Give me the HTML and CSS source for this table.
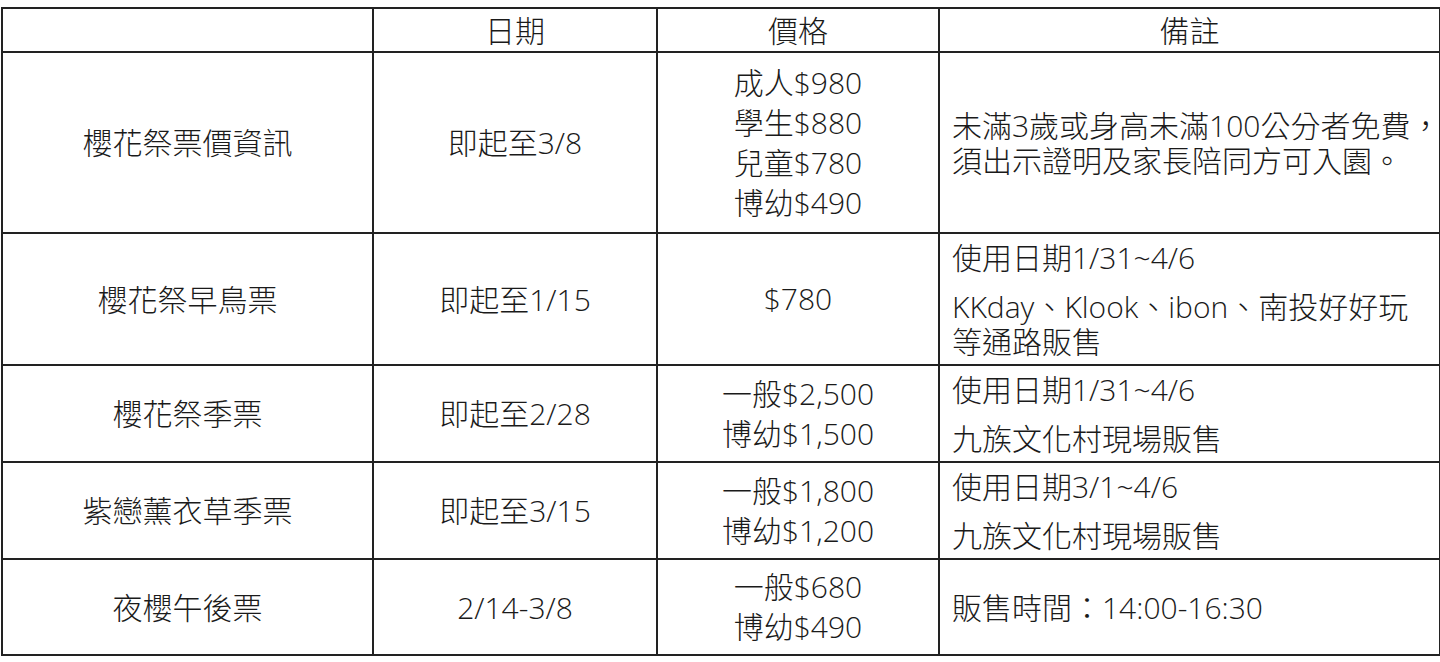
FILE: index.html
```html
<!DOCTYPE html>
<html lang="zh-Hant">
<head>
<meta charset="utf-8">
<title>票價資訊</title>
<link rel="stylesheet" href="styles.css">
</head>
<body>
<table class="tickets">
  <colgroup>
    <col class="c-name">
    <col class="c-date">
    <col class="c-price">
    <col class="c-note">
  </colgroup>
  <thead>
    <tr class="r-head">
      <th></th>
      <th>日期</th>
      <th>價格</th>
      <th>備註</th>
    </tr>
  </thead>
  <tbody>
    <tr class="r1">
      <td>櫻花祭票價資訊</td>
      <td>即起至3/8</td>
      <td class="price">成人$980<br>學生$880<br>兒童$780<br>博幼$490</td>
      <td class="note"><div class="para">未滿3歲或身高未滿100公分者免費，<br>須出示證明及家長陪同方可入園。</div></td>
    </tr>
    <tr class="r2">
      <td>櫻花祭早鳥票</td>
      <td>即起至1/15</td>
      <td class="price">$780</td>
      <td class="note"><div class="para">使用日期1/31~4/6</div><div class="para">KKday、Klook、ibon、南投好好玩<br>等通路販售</div></td>
    </tr>
    <tr class="r3">
      <td>櫻花祭季票</td>
      <td>即起至2/28</td>
      <td class="price">一般$2,500<br>博幼$1,500</td>
      <td class="note"><div class="para">使用日期1/31~4/6</div><div class="para">九族文化村現場販售</div></td>
    </tr>
    <tr class="r4">
      <td>紫戀薰衣草季票</td>
      <td>即起至3/15</td>
      <td class="price">一般$1,800<br>博幼$1,200</td>
      <td class="note"><div class="para">使用日期3/1~4/6</div><div class="para">九族文化村現場販售</div></td>
    </tr>
    <tr class="r5">
      <td>夜櫻午後票</td>
      <td>2/14-3/8</td>
      <td class="price">一般$680<br>博幼$490</td>
      <td class="note"><div class="para">販售時間：14:00-16:30</div></td>
    </tr>
  </tbody>
</table>
</body>
</html>
```

FILE: styles.css
```css
html, body {
  margin: 0;
  padding: 0;
  background: #ffffff;
}
body {
  padding: 7px 0 0 1px;
  font-family: "Open Sans", "Noto Sans CJK TC", sans-serif;
  color: #1a1a1a;
}
.tickets {
  border-collapse: collapse;
  table-layout: fixed;
  width: 1438px;
  font-size: 30px;
  font-weight: 300;
}
.c-name { width: 371px; }
.c-date { width: 284px; }
.c-price { width: 282px; }
.c-note { width: 501px; }

.tickets th,
.tickets td {
  border: 2px solid #222;
  padding: 0;
  text-align: center;
  vertical-align: middle;
  font-weight: 300;
  line-height: 35px;
}
.r-head { height: 44px; }
.r1 { height: 181px; }
.r2 { height: 132px; }
.r3 { height: 97px; }
.r4 { height: 97px; }
.r5 { height: 96px; }

.tickets td.price {
  line-height: 40px;
}
.tickets td.note {
  text-align: left;
  padding-left: 12px;
  white-space: nowrap;
}
.para + .para {
  margin-top: 14px;
}
```
